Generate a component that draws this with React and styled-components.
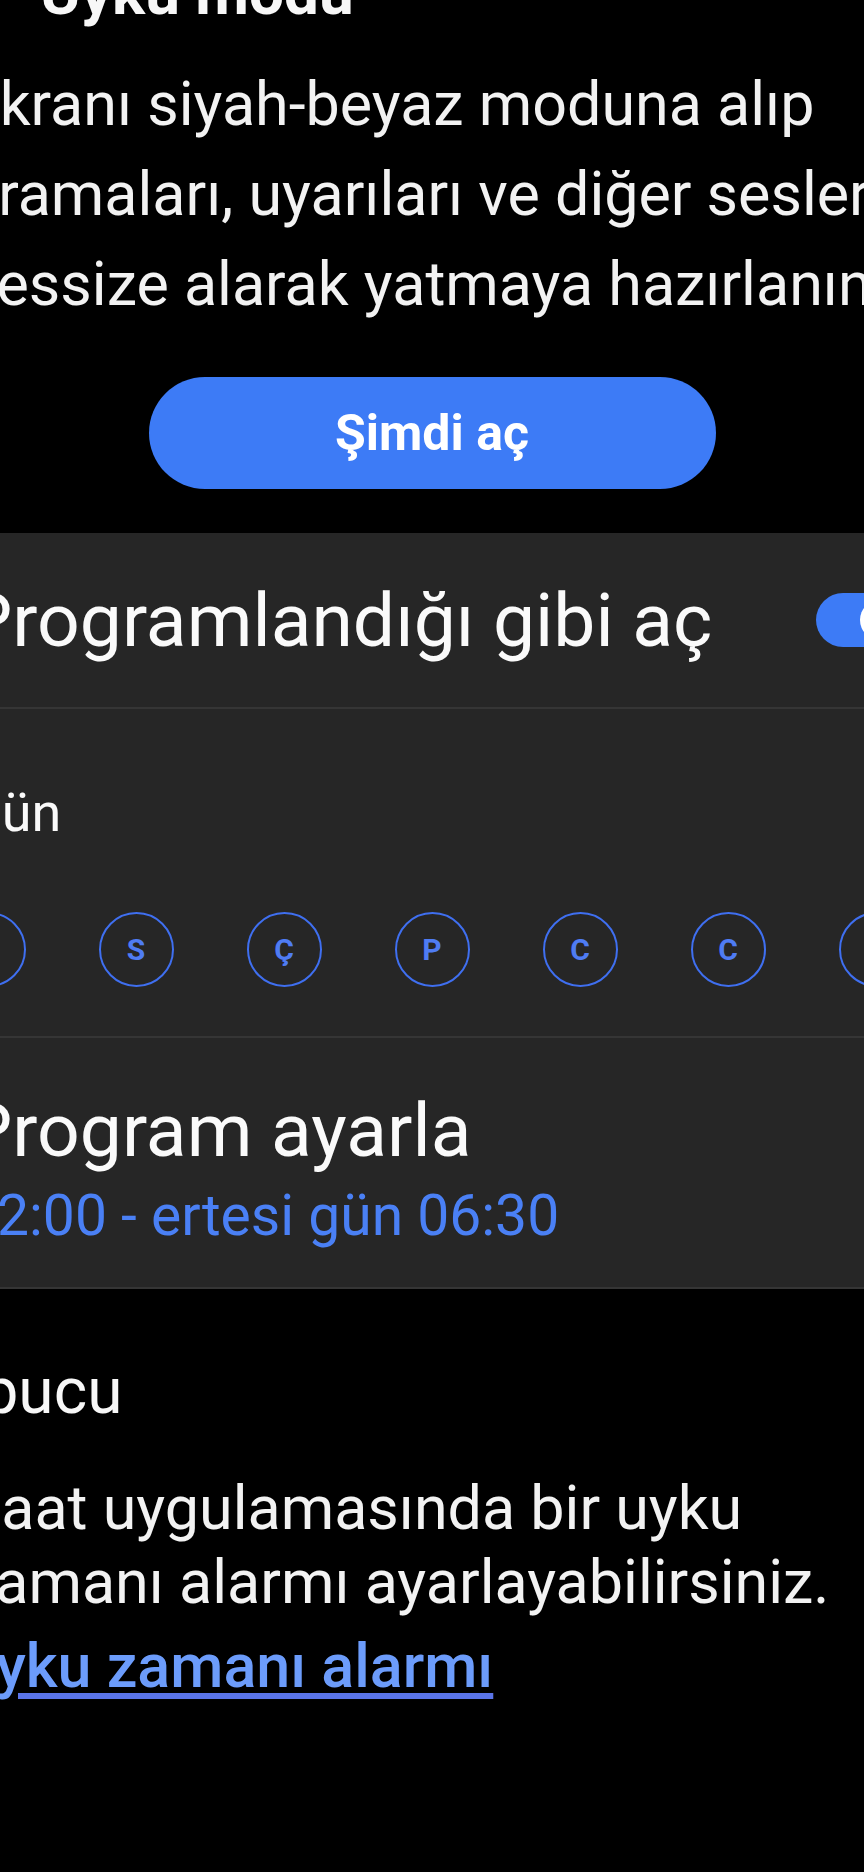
import React from 'react'
import styled, { createGlobalStyle } from 'styled-components'

const Global = createGlobalStyle`
  html, body {
    margin: 0;
    padding: 0;
    background: #000;
    overflow: hidden;
  }
  body {
    font-family: Roboto, "Noto Sans", "Liberation Sans", sans-serif;
    color: #f7f7f7;
  }
`

const Viewport = styled.div`
  width: 864px;
  height: 1872px;
  overflow: hidden;
  background: #000;
`

const Screen = styled.div`
  width: 1064px;
  margin: -44px 0 0 -100px;
  display: flex;
  flex-direction: column;
`

const Title = styled.h1`
  margin: 0 0 0 140px;
  font-size: 62px;
  line-height: 1.2;
  font-weight: 700;
  white-space: nowrap;
`

const Lines = styled.p`
  margin: ${(p) => p.$top || 0}px 0 0;
  padding-left: 65px;
  font-size: 61px;
  line-height: ${(p) => p.$lh}px;
  font-weight: 400;
  color: #f2f2f2;
`

const Line = styled.span`
  display: block;
  white-space: nowrap;
`

const PrimaryButton = styled.button`
  align-self: center;
  margin-top: 48px;
  width: 567px;
  height: 112px;
  border: 0;
  border-radius: 56px;
  background: #3d7bf6;
  color: #fff;
  font-family: inherit;
  font-size: 50px;
  font-weight: 700;
`

const Card = styled.section`
  margin-top: 44px;
  background: #262626;
  border-radius: 40px;
  border-bottom: 2px solid #353535;
`

const SwitchRow = styled.div`
  height: 174px;
  display: flex;
  align-items: center;
  justify-content: space-between;
  padding: 0 52px 0 65px;
  border-bottom: 2px solid #353535;
`

const RowTitle = styled.div`
  font-size: 75px;
  line-height: 1.2;
  color: #fafafa;
  white-space: nowrap;
`

const Toggle = styled.div`
  width: 96px;
  height: 54px;
  border-radius: 27px;
  background: #3d7bf6;
  display: flex;
  align-items: center;
  justify-content: flex-end;
  padding-right: 12px;
  box-sizing: border-box;
`

const Thumb = styled.span`
  width: 40px;
  height: 40px;
  border-radius: 50%;
  background: #fff;
`

const DaysRow = styled.div`
  padding: 72px 0 49px;
  border-bottom: 2px solid #353535;
`

const DaysLabel = styled.div`
  padding-left: 65px;
  font-size: 54px;
  line-height: 1.2;
  color: #fafafa;
`

const Days = styled.div`
  margin-top: 66px;
  display: grid;
  grid-template-columns: repeat(7, 148px);
  justify-content: center;
`

const Day = styled.span`
  justify-self: center;
  width: 75px;
  height: 75px;
  box-sizing: border-box;
  border: 2.5px solid #3f6ff0;
  border-radius: 50%;
  display: flex;
  align-items: center;
  justify-content: center;
  color: #4f7cf3;
  font-size: 30px;
  font-weight: 700;
`

const ScheduleRow = styled.div`
  padding: 47px 65px 36px;
`

const Sub = styled.div`
  margin-top: 7px;
  font-size: 57px;
  line-height: 1.2;
  color: #4a80f5;
  white-space: nowrap;
`

const SectionHead = styled.h2`
  margin: 65px 0 0;
  padding-left: 65px;
  font-size: 64px;
  line-height: 1.2;
  font-weight: 400;
`

const Link = styled.a`
  display: block;
  margin-top: 10px;
  padding-left: 56px;
  font-size: 61px;
  line-height: 74px;
  font-weight: 500;
  color: #6c9cfb;
  text-decoration: underline;
  text-decoration-color: #5a74e8;
  text-underline-offset: 6px;
  white-space: nowrap;
`

const days = ['P', 'S', 'Ç', 'P', 'C', 'C', 'P']

export default function App() {
  return (
    <Viewport>
      <Global />
      <Screen>
        <Title>Uyku modu</Title>
        <Lines $top={29} $lh={90}>
          <Line>Ekranı siyah-beyaz moduna alıp</Line>
          <Line>aramaları, uyarıları ve diğer sesleri</Line>
          <Line>sessize alarak yatmaya hazırlanın.</Line>
        </Lines>
        <PrimaryButton>Şimdi aç</PrimaryButton>

        <Card>
          <SwitchRow>
            <RowTitle>Programlandığı gibi aç</RowTitle>
            <Toggle>
              <Thumb />
            </Toggle>
          </SwitchRow>
          <DaysRow>
            <DaysLabel>Gün</DaysLabel>
            <Days>
              {days.map((d, i) => (
                <Day key={i}>{d}</Day>
              ))}
            </Days>
          </DaysRow>
          <ScheduleRow>
            <RowTitle>Program ayarla</RowTitle>
            <Sub>22:00 - ertesi gün 06:30</Sub>
          </ScheduleRow>
        </Card>

        <SectionHead>İpucu</SectionHead>
        <Lines $top={41} $lh={74}>
          <Line>Saat uygulamasında bir uyku</Line>
          <Line>zamanı alarmı ayarlayabilirsiniz.</Line>
        </Lines>
        <Link href="#">Uyku zamanı alarmı</Link>
      </Screen>
    </Viewport>
  )
}
